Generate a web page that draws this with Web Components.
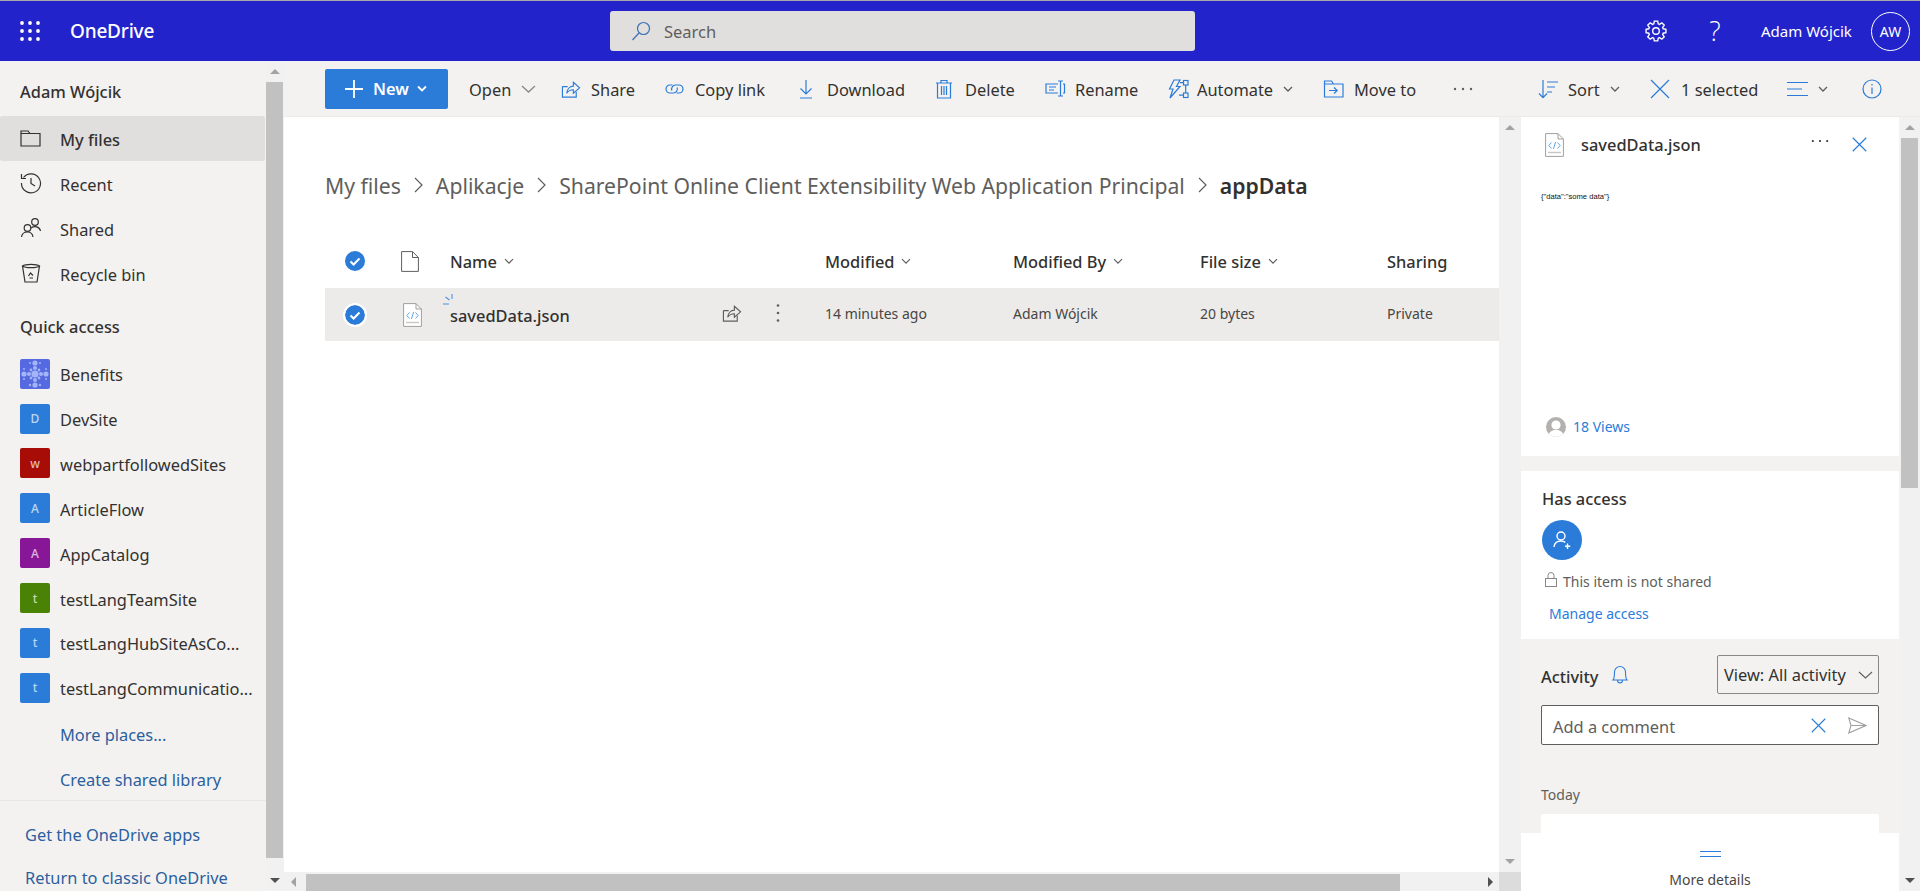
<!DOCTYPE html>
<html lang="en">
<head>
<meta charset="utf-8">
<title>OneDrive</title>
<style>
  html, body { margin: 0; height: 100%; overflow: hidden; }
  body { font-family: "Noto Sans", "Open Sans", sans-serif; color: #323130; background: #fff; }
</style>
</head>
<body>
<od-app></od-app>
<script>
const BLUE = '#2b7cd9';

function gearPath() {
  let d = '';
  const teeth = 8;
  for (let i = 0; i < teeth; i++) {
    const a = i * 2 * Math.PI / teeth;
    const pts = [[-.30, 8.2], [-.17, 11], [.17, 11], [.30, 8.2]];
    pts.forEach((p, j) => {
      const x = 12 + p[1] * Math.cos(a + p[0]);
      const y = 12 + p[1] * Math.sin(a + p[0]);
      d += (i === 0 && j === 0 ? 'M' : 'L') + x.toFixed(2) + ' ' + y.toFixed(2);
    });
  }
  return d + 'Z';
}

function benefitsDots() {
  const dots = [[15,15,3.6],[15,4,2.6],[15,26,2.6],[4,15,2.6],[26,15,2.6],[9,15,2],[21,15,2],[15,9,2],[15,21,2],[11,11,1.4],[19,11,1.4],[11,19,1.4],[19,19,1.4],[10,4,1],[20,4,1],[10,26,1.2],[20,26,1.2],[4,10,1],[4,20,1],[26,10,1],[26,20,1]];
  return dots.map(d => `<circle cx="${d[0]}" cy="${d[1]}" r="${d[2]}"/>`).join('');
}

function svg(inner, w, h, vb, color) {
  return `<svg xmlns="http://www.w3.org/2000/svg" width="${w}" height="${h}" viewBox="${vb}" fill="none" stroke="${color || BLUE}" stroke-width="1.2">${inner}</svg>`;
}

// icons are drawn on a 20 unit box unless size says otherwise
const ICONS = {
  share: c => svg('<path d="M1.5 7.5H7M1.5 7.5V18.5H16V13"/><path d="M6 14.5C6.5 9.5 10 7.2 13 7V3L19.5 8.8 13 14.5V10.8C10 10.8 7.6 12 6 14.5Z"/>', 20, 20, '0 0 21 20', c),
  link: c => svg('<path d="M8 6H5.5a4 4 0 0 0 0 8H9a4 4 0 0 0 3.6-5.5"/><path d="M12 14h2.5a4 4 0 0 0 0-8H11a4 4 0 0 0-3.6 5.5"/>', 21, 20, '0 0 20 20', c),
  download: c => svg('<path d="M10 1V14.5M4.5 9.5L10 15 15.5 9.5M4 19H16"/>', 20, 20, '0 0 20 20', c),
  trash: c => svg('<path d="M2 4H18M7 4V1.5H13V4M3.5 4V19H16.5V4M7.5 7V16M10 7V16M12.5 7V16"/>', 20, 20, '0 0 20 20', c),
  rename: c => svg('<path d="M13 5H1V14H13M15.5 2V17M13 2H18M13 17H18M18 5H19.5V14H18"/><path d="M4 8H11M4 11H9"/>', 21, 20, '0 0 21 20', c),
  automate: c => svg('<path d="M7 1H13L9.5 7.5H13L3 19 6 10H2.5Z" transform="translate(-1 0)"/><rect x="15.5" y="1.5" width="4.5" height="4.5"/><rect x="15.5" y="14" width="4.5" height="4.5"/><path d="M17.7 6V14M12 3.7H15.5M11 16.2H15.5"/>', 21, 20, '0 0 21 20', c),
  move: c => svg('<path d="M1.5 18V2H8.5L10.5 5H20V18ZM1.5 5H10.5"/><path d="M6 11.5H14M11 8.5L14.2 11.5 11 14.5"/>', 22, 20, '0 0 22 20', c),
  dots: c => `<svg xmlns="http://www.w3.org/2000/svg" width="20" height="4" viewBox="0 0 20 4" fill="${c || '#605e5c'}"><circle cx="2" cy="2" r="1.2"/><circle cx="10" cy="2" r="1.2"/><circle cx="18" cy="2" r="1.2"/></svg>`,
  sort: c => svg('<path d="M5 1V18.5M1 14.5L5 18.7 9 14.5M9 3H20M9 8H17M9 13H14"/>', 21, 20, '0 0 21 20', c),
  close: c => svg('<path d="M1 1L19 19M19 1L1 19"/>', 20, 20, '0 0 20 20', c),
  lines: c => svg('<path d="M0 3.5H21M0 10H15M0 16.5H21"/>', 21, 20, '0 0 21 20', c),
  info: c => svg('<circle cx="10" cy="10" r="9"/><path d="M10 8.5V15M10 5V6.5"/>', 20, 20, '0 0 20 20', c)
};

const NAV_ICONS = {
  folder: '<path d="M1 20V5H8L10 7.5H20V20ZM1 7.5H10"/>',
  clock: '<path d="M3.5 6.5A9.5 9.5 0 1 1 1.5 12M1.5 3V7.5H6"/><path d="M11 7V12.5L15 15"/>',
  people: '<circle cx="7.5" cy="12" r="3.3"/><path d="M1.5 21C2 17.5 4.5 16 7.5 16S12.5 17.5 13 21"/><circle cx="15" cy="6" r="3.3"/><path d="M11 12C14 10 19.5 10 20.5 15"/>',
  bin: '<path d="M2.5 5A9 2.5 0 0 1 19.5 5 9 2.5 0 0 1 2.5 5ZM2.5 5L5 21H17L19.5 5"/><path d="M8.5 15L10.5 12 13 14.5M9.5 17H13"/>'
};

class OdScrollbar extends HTMLElement {
  constructor() {
    super();
    const thumbTop = this.getAttribute('top') || '10';
    const thumbBottom = this.getAttribute('bottom') || '10';
    const downColor = this.getAttribute('down') || '#505050';
    this.attachShadow({mode: 'open'}).innerHTML = `
      <style>
        :host { display: block; position: relative; background: #f1f1f1; box-sizing: border-box; }
        .thumb { position: absolute; left: 0; right: 0; top: ${thumbTop}px; bottom: ${thumbBottom}px; background: #c1c1c1; }
        .up, .down { position: absolute; left: 50%; margin-left: -5px; width: 0; height: 0; border-left: 5px solid transparent; border-right: 5px solid transparent; }
        .up { top: 8px; border-bottom: 5px solid #a3a3a3; }
        .down { bottom: 8px; border-top: 5px solid ${downColor}; }
      </style>
      <div class="up"></div><div class="thumb"></div><div class="down"></div>`;
  }
}
customElements.define('od-scrollbar', OdScrollbar);

class OdSuiteBar extends HTMLElement {
  constructor() {
    super();
    const waffle = [0,1,2].map(r => [0,1,2].map(c => `<circle cx="${2 + c * 8}" cy="${2 + r * 8}" r="1.9"/>`).join('')).join('');
    this.attachShadow({mode: 'open'}).innerHTML = `
      <style>
        :host { display: flex; align-items: center; height: 60px; background: #2323cc; border-top: 1px solid #a8a8a8; color: #fff; }
        .waffle { margin-left: 20px; width: 20px; height: 20px; display: flex; }
        .brand { margin-left: 30px; font-size: 19px; font-weight: 500; width: 95px; white-space: nowrap; letter-spacing: -.2px; }
        .search { margin-left: 445px; width: 585px; height: 40px; box-sizing: border-box; background: #e1dfdd; border-radius: 3px; display: flex; align-items: center; padding-left: 21px; font-size: 16.5px; color: #605e5c; }
        .search svg { margin-right: 13px; }
        .right { margin-left: auto; display: flex; align-items: center; }
        .gear { display: flex; margin-right: 40px; }
        .help { font-family: "Open Sans", sans-serif; font-weight: 300; font-size: 27px; line-height: 30px; width: 16px; text-align: center; margin-right: 38px; }
        .name { font-size: 15px; white-space: nowrap; width: 94px; margin-right: 16px; }
        .avatar { box-sizing: border-box; width: 39px; height: 39px; border: 1px solid #fff; border-radius: 50%; display: flex; align-items: center; justify-content: center; font-size: 14px; margin-right: 10px; }
      </style>
      <div class="waffle"><svg width="20" height="20" viewBox="0 0 20 20" fill="#fff" xmlns="http://www.w3.org/2000/svg">${waffle}</svg></div>
      <div class="brand">OneDrive</div>
      <div class="search">
        ${svg('<circle cx="12.5" cy="7.5" r="6"/><path d="M8 12L1.5 19"/>', 20, 20, '0 0 20 20', '#3b6fb5')}
        <span>Search</span>
      </div>
      <div class="right">
        <div class="gear"><svg xmlns="http://www.w3.org/2000/svg" width="22" height="22" viewBox="0 0 24 24" fill="none" stroke="#fff" stroke-width="1.5"><path d="${gearPath()}"/><circle cx="12" cy="12" r="3.6"/></svg></div>
        <div class="help">?</div>
        <div class="name">Adam Wójcik</div>
        <div class="avatar">AW</div>
      </div>`;
  }
}
customElements.define('od-suite-bar', OdSuiteBar);

class OdNavItem extends HTMLElement {
  constructor() {
    super();
    const icon = this.getAttribute('icon');
    const active = this.hasAttribute('active');
    this.attachShadow({mode: 'open'}).innerHTML = `
      <style>
        :host { display: flex; align-items: center; height: 45px; margin-right: 1px; border-radius: 2px; font-size: 16.4px; color: #323130; ${active ? 'background: #e1dfdd; font-weight: 500;' : ''} }
        .ic { width: 22px; margin-left: 20px; margin-right: 18px; display: flex; }
        .t { padding-top: 3px; }
      </style>
      <div class="ic"><svg xmlns="http://www.w3.org/2000/svg" width="22" height="24" viewBox="0 0 22 24" fill="none" stroke="#323130" stroke-width="1.2">${NAV_ICONS[icon]}</svg></div>
      <div class="t"><slot></slot></div>`;
  }
}
customElements.define('od-nav-item', OdNavItem);

class OdSiteItem extends HTMLElement {
  constructor() {
    super();
    const color = this.getAttribute('color');
    const letter = this.getAttribute('letter');
    const dots = this.hasAttribute('dots');
    const tile = dots
      ? `<svg xmlns="http://www.w3.org/2000/svg" width="30" height="30" viewBox="0 0 30 30" fill="#a3b4f7">${benefitsDots()}</svg>`
      : letter;
    this.attachShadow({mode: 'open'}).innerHTML = `
      <style>
        :host { display: flex; align-items: center; height: 45px; font-size: 16.4px; color: #323130; white-space: nowrap; }
        .tile { width: 30px; height: 30px; border-radius: 2px; margin-left: 20px; margin-right: 10px; flex: none; display: flex; align-items: center; justify-content: center; background: ${color}; color: rgba(255,255,255,.7); font-size: 12px; font-weight: 500; overflow: hidden; }
        .label { padding-top: 2px; }
      </style>
      <div class="tile">${tile}</div>
      <div class="label"><slot></slot></div>`;
  }
}
customElements.define('od-site-item', OdSiteItem);

class OdNav extends HTMLElement {
  constructor() {
    super();
    this.attachShadow({mode: 'open'}).innerHTML = `
      <style>
        :host { display: flex; flex-direction: column; width: 266px; flex: none; background: #f3f2f1; color: #323130; overflow: hidden; }
        .user { height: 55px; display: flex; align-items: center; padding-left: 20px; font-size: 16.4px; font-weight: 500; box-sizing: border-box; padding-top: 7px; }
        .qa { height: 56px; box-sizing: border-box; display: flex; align-items: center; padding-left: 20px; padding-top: 6px; font-size: 16.4px; font-weight: 500; }
        .more { height: 45px; box-sizing: border-box; display: flex; align-items: center; padding-left: 60px; padding-top: 3px; font-size: 16.4px; color: #2b5f9e; }
        .foot { margin-top: auto; border-top: 1px solid #e9e7e5; padding-top: 12px; height: 78px; }
        .foot div { height: 43px; display: flex; align-items: center; padding-left: 25px; font-size: 16.4px; color: #2b5f9e; white-space: nowrap; }
      </style>
      <div class="user">Adam Wójcik</div>
      <od-nav-item icon="folder" active>My files</od-nav-item>
      <od-nav-item icon="clock">Recent</od-nav-item>
      <od-nav-item icon="people">Shared</od-nav-item>
      <od-nav-item icon="bin">Recycle bin</od-nav-item>
      <div class="qa">Quick access</div>
      <od-site-item color="#5569e0" dots>Benefits</od-site-item>
      <od-site-item color="#2b7cd9" letter="D">DevSite</od-site-item>
      <od-site-item color="#a80c06" letter="w">webpartfollowedSites</od-site-item>
      <od-site-item color="#2b7cd9" letter="A">ArticleFlow</od-site-item>
      <od-site-item color="#881798" letter="A">AppCatalog</od-site-item>
      <od-site-item color="#498205" letter="t">testLangTeamSite</od-site-item>
      <od-site-item color="#2b7cd9" letter="t">testLangHubSiteAsCo...</od-site-item>
      <od-site-item color="#2b7cd9" letter="t">testLangCommunicatio...</od-site-item>
      <div class="more">More places...</div>
      <div class="more">Create shared library</div>
      <div class="foot"><div>Get the OneDrive apps</div><div>Return to classic OneDrive</div></div>`;
  }
}
customElements.define('od-nav', OdNav);

class OdTbItem extends HTMLElement {
  constructor() {
    super();
    const icon = this.getAttribute('icon');
    const width = this.getAttribute('w');
    const chev = this.getAttribute('chev');
    const gap = this.getAttribute('gap') || '10';
    const shift = this.getAttribute('shift') || '0';
    const chevMarkup = chev
      ? `<svg class="chev" style="margin-left:${this.getAttribute('chev-gap') || 10}px" xmlns="http://www.w3.org/2000/svg" width="${chev === 'wide' ? 15 : 10}" height="8" viewBox="0 0 ${chev === 'wide' ? 15 : 10} 8" fill="none" stroke="${chev === 'wide' ? '#8a8886' : '#605e5c'}" stroke-width="1.3"><path d="${chev === 'wide' ? 'M1 1L7.5 7 14 1' : 'M1 2L5 6 9 2'}"/></svg>`
      : '';
    this.attachShadow({mode: 'open'}).innerHTML = `
      <style>
        :host { display: flex; align-items: center; flex: none; width: ${width}px; height: 40px; font-size: 16.4px; color: #323130; white-space: nowrap; }
        .ic { display: flex; align-items: center; margin-left: ${shift}px; margin-right: ${gap}px; }
        .chev { flex: none; }
        .t { padding-top: 1px; }
      </style>
      ${icon ? `<span class="ic">${ICONS[icon]()}</span>` : ''}
      <span class="t"><slot></slot></span>${chevMarkup}`;
  }
}
customElements.define('od-tb-item', OdTbItem);

class OdToolbar extends HTMLElement {
  constructor() {
    super();
    this.attachShadow({mode: 'open'}).innerHTML = `
      <style>
        :host { display: flex; align-items: center; height: 56px; box-sizing: border-box; background: #f3f2f1; padding-left: 41px; border-bottom: 1px solid #edebe9; flex: none; }
        .new { width: 123px; height: 40px; margin-right: 21px; box-sizing: border-box; background: ${BLUE}; border-radius: 2px; color: #fff; display: flex; align-items: center; padding-left: 20px; font-size: 16.4px; font-weight: 600; flex: none; }
        .new svg { flex: none; }
      </style>
      <div class="new">
        <svg xmlns="http://www.w3.org/2000/svg" width="18" height="18" viewBox="0 0 18 18" stroke="#fff" stroke-width="1.8" fill="none"><path d="M9 0V18M0 9H18"/></svg>
        <span style="margin:0 8px 0 10px">New</span>
        <svg xmlns="http://www.w3.org/2000/svg" width="10" height="8" viewBox="0 0 10 8" stroke="#fff" stroke-width="1.8" fill="none"><path d="M1 1.5L5 5.5 9 1.5"/></svg>
      </div>
      <od-tb-item w="92" chev="wide">Open</od-tb-item>
      <od-tb-item w="103" icon="share">Share</od-tb-item>
      <od-tb-item w="135" icon="link">Copy link</od-tb-item>
      <od-tb-item w="138" icon="download" shift="-3" gap="11">Download</od-tb-item>
      <od-tb-item w="108" icon="trash" shift="-3" gap="11">Delete</od-tb-item>
      <od-tb-item w="123" icon="rename" gap="9">Rename</od-tb-item>
      <od-tb-item w="155" icon="automate" gap="8" chev="small">Automate</od-tb-item>
      <od-tb-item w="130" icon="move" gap="9">Move to</od-tb-item>
      <od-tb-item w="85" icon="dots"></od-tb-item>
      <od-tb-item w="112" icon="sort" gap="9" chev="small">Sort</od-tb-item>
      <od-tb-item w="137" icon="close" gap="11">1 selected</od-tb-item>
      <od-tb-item w="75" icon="lines" gap="0" chev="small"></od-tb-item>
      <od-tb-item w="20" icon="info"></od-tb-item>`;
  }
}
customElements.define('od-toolbar', OdToolbar);

class OdBreadcrumb extends HTMLElement {
  constructor() {
    super();
    const sep = '<svg class="sep" xmlns="http://www.w3.org/2000/svg" width="9" height="16" viewBox="0 0 9 16" fill="none" stroke="#605e5c" stroke-width="1.2"><path d="M1 1L8 8 1 15"/></svg>';
    this.attachShadow({mode: 'open'}).innerHTML = `
      <style>
        :host { display: flex; align-items: center; height: 30px; font-size: 21.2px; color: #605e5c; white-space: nowrap; }
        .sep { margin: 0 13px 0 13px; flex: none; }
        b { font-weight: 600; color: #323130; }
      </style>
      <span>My files</span>${sep}<span>Aplikacje</span>${sep}<span>SharePoint Online Client Extensibility Web Application Principal</span>${sep}<b>appData</b>`;
  }
}
customElements.define('od-breadcrumb', OdBreadcrumb);

const CHECK = `<svg xmlns="http://www.w3.org/2000/svg" width="20" height="20" viewBox="0 0 20 20"><circle cx="10" cy="10" r="10" fill="${BLUE}"/><path d="M5.5 10.5L8.6 13.5 14.5 7.5" fill="none" stroke="#fff" stroke-width="2"/></svg>`;
const JSON_FILE = `<svg xmlns="http://www.w3.org/2000/svg" width="19" height="24" viewBox="0 0 19 24" fill="none"><path d="M.6.6H13L18.4 6V23.4H.6Z" fill="#fff" stroke="#a19f9d"/><path d="M13 .6V6H18.4" stroke="#a19f9d"/><path d="M3 19.5H16" stroke="#c8c6c4" stroke-width="1.4"/><path d="M6.5 9.5L3.8 12.5 6.5 15.5M12.5 9.5L15.2 12.5 12.5 15.5M10.6 9L8.4 16" stroke="#62a6ea"/></svg>`;

class OdFileList extends HTMLElement {
  constructor() {
    super();
    const headChev = '<svg xmlns="http://www.w3.org/2000/svg" width="10" height="7" viewBox="0 0 10 7" fill="none" stroke="#605e5c" stroke-width="1.2" style="margin-left:7px"><path d="M1 1.2L5 5.2 9 1.2"/></svg>';
    this.attachShadow({mode: 'open'}).innerHTML = `
      <style>
        :host { display: block; }
        .head, .row { display: grid; grid-template-columns: 75px 50px 375px 188px 187px 187px 1fr; align-items: center; }
        .head { height: 54px; margin-top: 3px; font-size: 16.4px; font-weight: 500; color: #323130; white-space: nowrap; }
        .head > div { display: flex; align-items: center; }
        .row { height: 53px; background: #edebe9; font-size: 14px; color: #484644; white-space: nowrap; }
        .row > div:nth-child(n+4) { padding-bottom: 2px; }
        .chk { padding-left: 20px; display: flex; }
        .row .chk svg { border-radius: 50%; box-shadow: 0 0 0 2px #fff; }
        .ic { display: flex; padding-left: 1px; }
        .row .ic { padding-left: 3px; }
        .name { position: relative; display: flex; align-items: center; font-size: 16.4px; font-weight: 500; color: #323130; padding-top: 2px; }
        .spark { position: absolute; left: -8px; top: -8px; }
        .share { position: absolute; left: 272px; top: 1px; display: flex; }
        .more { position: absolute; left: 326px; top: 1px; display: flex; }
      </style>
      <div class="head">
        <div class="chk">${CHECK}</div>
        <div class="ic"><svg xmlns="http://www.w3.org/2000/svg" width="18" height="21" viewBox="0 0 18 21" fill="none" stroke="#605e5c"><path d="M.6.6H11.5L17.4 6.5V20.4H.6Z"/><path d="M11.5.6V6.5H17.4"/></svg></div>
        <div>Name${headChev}</div>
        <div>Modified${headChev}</div>
        <div>Modified By${headChev}</div>
        <div>File size${headChev}</div>
        <div>Sharing</div>
      </div>
      <div class="row">
        <div class="chk">${CHECK}</div>
        <div class="ic">${JSON_FILE}</div>
        <div class="name">
          <svg class="spark" xmlns="http://www.w3.org/2000/svg" width="12" height="12" viewBox="0 0 12 12" fill="none" stroke="#4f8fe0" stroke-width="1.1"><path d="M10 0V5M3.5 3L7.5 6M1 10H7"/></svg>
          savedData.json
          <span class="share">${ICONS.share('#605e5c')}</span>
          <span class="more"><svg xmlns="http://www.w3.org/2000/svg" width="4" height="20" viewBox="0 0 4 20" fill="#605e5c"><circle cx="2" cy="2.5" r="1.3"/><circle cx="2" cy="10" r="1.3"/><circle cx="2" cy="17.5" r="1.3"/></svg></span>
        </div>
        <div>14 minutes ago</div>
        <div>Adam Wójcik</div>
        <div>20 bytes</div>
        <div>Private</div>
      </div>`;
  }
}
customElements.define('od-file-list', OdFileList);

class OdDetails extends HTMLElement {
  constructor() {
    super();
    this.attachShadow({mode: 'open'}).innerHTML = `
      <style>
        :host { display: flex; flex-direction: column; width: 378px; flex: none; background: #f3f2f1; overflow: hidden; }
        .body { flex: 1; min-height: 0; overflow: hidden; }
        .card { background: #fff; }
        .top { height: 339px; box-sizing: border-box; padding: 16px 24px 0; display: flex; flex-direction: column; }
        .title { display: flex; align-items: center; height: 24px; font-size: 16.4px; font-weight: 500; color: #323130; }
        .title .name { margin-left: 17px; padding-bottom: 2px; }
        .title .dots { margin-left: auto; margin-right: 23px; margin-top: -8px; display: flex; }
        .title .x { display: flex; margin-right: 8px; margin-top: -2px; }
        .preview { font-family: "Liberation Sans", Arial, sans-serif; font-size: 7.6px; color: #111; margin: 35px 0 0 -4px; height: 10px; line-height: 10px; }
        .views { margin-top: auto; height: 39px; display: flex; align-items: flex-start; font-size: 14px; color: ${BLUE}; }
        .views svg { margin: 0 7px 0 1px; }
        .access { margin-top: 15px; height: 168px; box-sizing: border-box; padding: 16px 21px 0; }
        h3 { margin: 0; font-size: 16.4px; font-weight: 500; color: #323130; line-height: 24px; }
        .add { width: 40px; height: 40px; border-radius: 50%; background: ${BLUE}; margin-top: 9px; display: flex; align-items: center; justify-content: center; }
        .lock { display: flex; align-items: center; height: 20px; margin-top: 11px; font-size: 14px; color: #605e5c; margin-left: 3px; white-space: nowrap; }
        .lock svg { margin-right: 6px; margin-top: -4px; }
        .manage { font-size: 14px; color: #2b7cd9; margin: 13px 0 0 7px; line-height: 20px; }
        .activity { padding: 16px 20px 0; }
        .act-head { display: flex; align-items: center; height: 39px; }
        .act-head h3 { margin-right: 14px; margin-top: 4px; }
        .select { margin-left: auto; width: 162px; height: 39px; box-sizing: border-box; border: 1px solid #8a8886; border-radius: 2px; display: flex; align-items: center; padding-left: 6px; font-size: 16.4px; color: #323130; white-space: nowrap; }
        .select svg { margin-left: auto; margin-right: 5px; flex: none; }
        .comment { margin-top: 11px; height: 40px; box-sizing: border-box; background: #fff; border: 1px solid #605e5c; border-radius: 2px; display: flex; align-items: center; padding-left: 11px; font-size: 16.4px; color: #605e5c; }
        .comment span:first-child { padding-top: 2px; }
        .comment .x { margin-left: auto; display: flex; margin-right: 22px; }
        .comment .send { display: flex; margin-right: 11px; }
        .today { margin-top: 40px; font-size: 14px; color: #605e5c; line-height: 20px; }
        .feed { margin-top: 9px; height: 60px; background: #fff; border-radius: 2px; }
        .foot { flex: none; height: 58px; background: #fff; display: flex; flex-direction: column; align-items: center; font-size: 14px; color: #484644; }
        .foot i { display: block; width: 21px; height: 4px; border-top: 1px solid ${BLUE}; border-bottom: 1px solid ${BLUE}; margin-top: 18px; }
        .foot span { margin-top: 13px; line-height: 20px; }
      </style>
      <div class="body">
        <div class="card top">
          <div class="title">
            ${JSON_FILE}
            <span class="name">savedData.json</span>
            <span class="dots">${ICONS.dots('#323130').replace('width="20"', 'width="18"')}</span>
            <span class="x">${ICONS.close().replace('width="20" height="20"', 'width="15" height="15"').replace('stroke-width="1.2"', 'stroke-width="1.6"')}</span>
          </div>
          <div class="preview">{"data":"some data"}</div>
          <div class="views">
            <svg xmlns="http://www.w3.org/2000/svg" width="20" height="20" viewBox="0 0 20 20"><clipPath id="c"><circle cx="10" cy="10" r="10"/></clipPath><g clip-path="url(#c)"><rect width="20" height="20" fill="#b3b0ad"/><circle cx="10" cy="8" r="4.6" fill="#fff"/><path d="M2 20C3 14.5 6 13 10 13S17 14.5 18 20Z" fill="#fff"/></g></svg>
            <span>18 Views</span>
          </div>
        </div>
        <div class="card access">
          <h3>Has access</h3>
          <div class="add"><svg xmlns="http://www.w3.org/2000/svg" width="20" height="20" viewBox="0 0 20 20" fill="none" stroke="#fff" stroke-width="1.4"><circle cx="9" cy="6" r="4"/><path d="M2 17C2.5 12.5 5.5 11 9 11C10.5 11 12 11.4 13.2 12.4M15.5 13.5V19M13 16.2H18.2"/></svg></div>
          <div class="lock"><svg xmlns="http://www.w3.org/2000/svg" width="12" height="15" viewBox="0 0 12 15" fill="none" stroke="#8a8886"><rect x=".5" y="6.5" width="11" height="8"/><path d="M3 6.5V3.5a3 3 0 0 1 6 0V6.5"/></svg>This item is not shared</div>
          <div class="manage">Manage access</div>
        </div>
        <div class="activity">
          <div class="act-head">
            <h3>Activity</h3>
            <svg xmlns="http://www.w3.org/2000/svg" width="16" height="19" viewBox="0 0 16 19" fill="none" stroke="${BLUE}" stroke-width="1.1"><path d="M1 15C2.5 13.5 2.5 12 2.5 7A5.5 5.5 0 0 1 13.5 7C13.5 12 13.5 13.5 15 15ZM5.5 15C5.5 19 10.5 19 10.5 15"/></svg>
            <div class="select">View: All activity<svg xmlns="http://www.w3.org/2000/svg" width="15" height="8" viewBox="0 0 15 8" fill="none" stroke="#605e5c" stroke-width="1.1"><path d="M1 1L7.5 7 14 1"/></svg></div>
          </div>
          <div class="comment">
            <span>Add a comment</span>
            <span class="x">${ICONS.close().replace('width="20" height="20"', 'width="15" height="15"').replace('stroke-width="1.2"', 'stroke-width="1.5"')}</span>
            <span class="send"><svg xmlns="http://www.w3.org/2000/svg" width="19" height="17" viewBox="0 0 19 17" fill="none" stroke="#a19f9d" stroke-width="1.1"><path d="M.8 1L18 8.5 .8 16 3 8.5ZM3 8.5H18"/></svg></span>
          </div>
          <div class="today">Today</div>
          <div class="feed"></div>
        </div>
      </div>
      <div class="foot"><i></i><span>More details</span></div>`;
  }
}
customElements.define('od-details', OdDetails);

class OdApp extends HTMLElement {
  constructor() {
    super();
    this.attachShadow({mode: 'open'}).innerHTML = `
      <style>
        :host { display: flex; flex-direction: column; width: 1920px; height: 891px; overflow: hidden; }
        .body { flex: 1; min-height: 0; display: flex; }
        .nav-bar { width: 17px; flex: none; }
        .gutter { width: 1px; flex: none; background: #f1f1f1; }
        .main { flex: 1; min-width: 0; display: flex; flex-direction: column; }
        .panes { flex: 1; min-height: 0; display: flex; }
        .list { width: 1215px; flex: none; display: flex; flex-direction: column; background: #fff; }
        .list-inner { flex: 1; min-height: 0; padding: 53px 0 0 41px; }
        od-breadcrumb { margin-bottom: 34px; }
        .hbar { height: 19px; flex: none; background: #f1f1f1; position: relative; }
        .hbar .thumb { position: absolute; left: 22px; right: 99px; top: 2px; bottom: 0; background: #c1c1c1; }
        .hbar .l, .hbar .r { position: absolute; top: 5px; width: 0; height: 0; border-top: 5px solid transparent; border-bottom: 5px solid transparent; }
        .hbar .l { left: 7px; border-right: 5px solid #a3a3a3; }
        .hbar .r { right: 6px; border-left: 5px solid #505050; }
        .vcol { width: 22px; flex: none; display: flex; flex-direction: column; }
        .vbar1 { flex: 1; }
        .corner { height: 19px; flex: none; background: #dcdcdc; }
        .gap { width: 2px; background: #f3f2f1; flex: none; }
        .vbar2 { width: 17px; flex: none; }
        .edge { width: 2px; background: #f1f1f1; flex: none; }
      </style>
      <od-suite-bar></od-suite-bar>
      <div class="body">
        <od-nav></od-nav>
        <od-scrollbar class="nav-bar" top="21" bottom="33"></od-scrollbar>
        <div class="gutter"></div>
        <div class="main">
          <od-toolbar></od-toolbar>
          <div class="panes">
            <div class="list">
              <div class="list-inner">
                <od-breadcrumb></od-breadcrumb>
                <od-file-list></od-file-list>
              </div>
              <div class="hbar"><div class="l"></div><div class="thumb"></div><div class="r"></div></div>
            </div>
            <div class="vcol">
              <od-scrollbar class="vbar1" top="891" bottom="0" down="#a3a3a3"></od-scrollbar>
              <div class="corner"></div>
            </div>
            <od-details></od-details>
            <div class="gap"></div>
            <od-scrollbar class="vbar2" top="21" bottom="403"></od-scrollbar>
            <div class="edge"></div>
          </div>
        </div>
      </div>`;
  }
}
customElements.define('od-app', OdApp);
</script>
</body>
</html>
